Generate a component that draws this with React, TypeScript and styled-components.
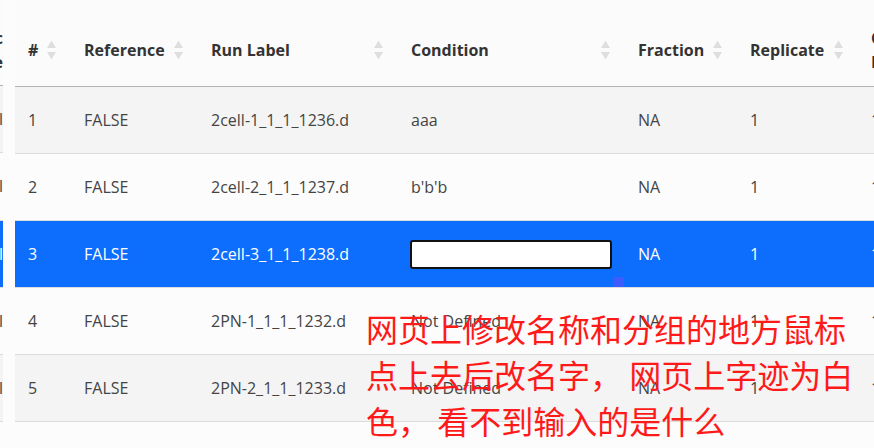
import React from "react";
import styled, { createGlobalStyle } from "styled-components";

const GlobalStyle = createGlobalStyle`
  html, body {
    margin: 0;
    padding: 0;
    background: #fcfcfc;
    overflow: hidden;
  }
  body {
    font-family: "Open Sans", "Noto Sans", sans-serif;
  }
`;

const Page = styled.div`
  position: relative;
  display: flex;
  align-items: flex-start;
  gap: 12px;
  width: 874px;
  height: 448px;
  overflow: hidden;
  background: #fcfcfc;
`;

const SideStrip = styled.div`
  flex: none;
  width: 3px;
  overflow: hidden;
  display: flex;
  justify-content: flex-end;
`;

const SideColumn = styled.div`
  flex: none;
  width: 80px;
  display: flex;
  flex-direction: column;
  font-size: 16px;
  line-height: 24px;
  color: #444;
`;

const SideHead = styled.div`
  height: 86px;
  box-sizing: border-box;
  padding-top: 26px;
  text-align: right;
  font-weight: 700;
  color: #333;
  border-bottom: 1px solid #b3b3b3;
  background: #fbfbfb;
`;

const SideCell = styled.div<{ $striped?: boolean; $selected?: boolean }>`
  height: 66.25px;
  display: flex;
  align-items: center;
  justify-content: flex-end;
  border-bottom: 1px solid #dcdcdc;
  background: ${(p) => (p.$selected ? "#0d6efd" : p.$striped ? "#f4f4f4" : "transparent")};
  color: ${(p) => (p.$selected ? "#fff" : "#444")};
`;

const Table = styled.table`
  flex: none;
  width: 980px;
  border-collapse: collapse;
  table-layout: fixed;
  font-size: 16px;
  line-height: 24px;
  color: #444;
`;

const HeadCell = styled.th`
  padding: 26px 15px 12px 13px;
  text-align: left;
  font-weight: 700;
  color: #333;
  vertical-align: middle;
  border-bottom: 1px solid #b3b3b3;
  background: #fbfbfb;
`;

const HeadInner = styled.div`
  display: flex;
  align-items: center;
  justify-content: space-between;
  gap: 8px;
`;

const Row = styled.tr<{ $striped: boolean; $selected: boolean }>`
  background: ${(p) => (p.$selected ? "#0d6efd" : p.$striped ? "#f4f4f4" : "transparent")};
  color: ${(p) => (p.$selected ? "#fff" : "#444")};
`;

const Cell = styled.td<{ $editing?: boolean }>`
  position: relative;
  height: 66.25px;
  box-sizing: border-box;
  padding: ${(p) => (p.$editing ? "18px 13px 18px 12px" : "21px 13px")};
  border-bottom: 1px solid #dcdcdc;
  white-space: nowrap;
  vertical-align: middle;
`;

const EditInput = styled.input`
  display: block;
  box-sizing: border-box;
  width: 100%;
  height: 29px;
  margin: 0;
  padding: 0 6px;
  border: 2px solid #111;
  border-radius: 3px;
  background: #fff;
  color: #fff;
  font: inherit;
  outline: none;
`;

const ResizeGrip = styled.span`
  position: absolute;
  right: 1px;
  bottom: 0;
  width: 11px;
  height: 10px;
  background: #3c5cfd;
`;

const Note = styled.div`
  position: absolute;
  left: 366px;
  top: 305px;
  font-family: "Noto Sans CJK SC", "Noto Sans CJK JP", sans-serif;
  font-size: 32px;
  line-height: 46px;
  color: #ff1a1a;
  white-space: pre;
  pointer-events: none;
`;

const NoteLine = styled.div``;

const SortIcon = () => (
  <svg width="9" height="20" viewBox="0 0 9 20" style={{ flex: "none" }}>
    <polygon points="0,8 4.5,0.5 9,8" fill="#dedede" />
    <polygon points="0,12 9,12 4.5,19.5" fill="#dedede" />
  </svg>
);

const columns = [
  { label: "#", width: 56 },
  { label: "Reference", width: 127 },
  { label: "Run Label", width: 200 },
  { label: "Condition", width: 227 },
  { label: "Fraction", width: 112 },
  { label: "Replicate", width: 121 },
  { label: "Cell Fraction", width: 137 },
];

const rows = [
  { n: "1", ref: "FALSE", run: "2cell-1_1_1_1236.d", cond: "aaa", frac: "NA", rep: "1", last: "1" },
  { n: "2", ref: "FALSE", run: "2cell-2_1_1_1237.d", cond: "b'b'b", frac: "NA", rep: "1", last: "1" },
  { n: "3", ref: "FALSE", run: "2cell-3_1_1_1238.d", cond: "", frac: "NA", rep: "1", last: "1", editing: true },
  { n: "4", ref: "FALSE", run: "2PN-1_1_1_1232.d", cond: "Not Defined", frac: "NA", rep: "1", last: "1" },
  { n: "5", ref: "FALSE", run: "2PN-2_1_1_1233.d", cond: "Not Defined", frac: "NA", rep: "1", last: "1" },
];

export default function App() {
  return (
    <>
      <GlobalStyle />
      <Page>
        <SideStrip>
          <SideColumn>
            <SideHead>
              Spec
              <br />
              Type
            </SideHead>
            {rows.map((r, i) => (
              <SideCell key={r.n} $striped={i % 2 === 0} $selected={!!r.editing}>
                Control
              </SideCell>
            ))}
          </SideColumn>
        </SideStrip>
        <Table>
          <colgroup>
            {columns.map((c) => (
              <col key={c.label} style={{ width: c.width }} />
            ))}
          </colgroup>
          <thead>
            <tr>
              {columns.map((c) => (
                <HeadCell key={c.label}>
                  <HeadInner>
                    <span>{c.label}</span>
                    <SortIcon />
                  </HeadInner>
                </HeadCell>
              ))}
            </tr>
          </thead>
          <tbody>
            {rows.map((r, i) => (
              <Row key={r.n} $striped={i % 2 === 0} $selected={!!r.editing}>
                <Cell>{r.n}</Cell>
                <Cell>{r.ref}</Cell>
                <Cell>{r.run}</Cell>
                {r.editing ? (
                  <Cell $editing>
                    <EditInput defaultValue="" />
                    <ResizeGrip />
                  </Cell>
                ) : (
                  <Cell>{r.cond}</Cell>
                )}
                <Cell>{r.frac}</Cell>
                <Cell>{r.rep}</Cell>
                <Cell>{r.last}</Cell>
              </Row>
            ))}
          </tbody>
        </Table>
        <Note>
          <NoteLine>网页上修改名称和分组的地方鼠标</NoteLine>
          <NoteLine>点上去后改名字， 网页上字迹为白</NoteLine>
          <NoteLine>色， 看不到输入的是什么</NoteLine>
        </Note>
      </Page>
    </>
  );
}
